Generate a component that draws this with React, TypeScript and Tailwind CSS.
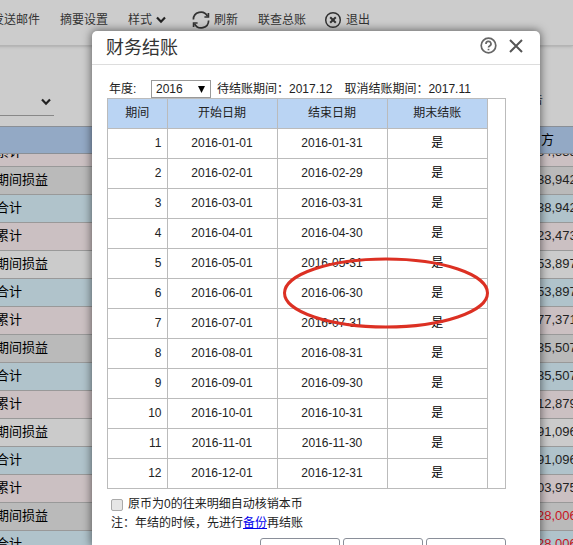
import { useState } from 'react';

const PERIODS = [
  ['1', '2016-01-01', '2016-01-31'],
  ['2', '2016-02-01', '2016-02-29'],
  ['3', '2016-03-01', '2016-03-31'],
  ['4', '2016-04-01', '2016-04-30'],
  ['5', '2016-05-01', '2016-05-31'],
  ['6', '2016-06-01', '2016-06-30'],
  ['7', '2016-07-01', '2016-07-31'],
  ['8', '2016-08-01', '2016-08-31'],
  ['9', '2016-09-01', '2016-09-30'],
  ['10', '2016-10-01', '2016-10-31'],
  ['11', '2016-11-01', '2016-11-30'],
  ['12', '2016-12-01', '2016-12-31'],
];

const PINK = 'bg-[#cbc0c2]';
const BLUE = 'bg-[#b0c3cb]';
const DARK = 'bg-[#bababa]';
const LIGHT = 'bg-[#cbcbcb]';

const LEDGER = [
  { label: '累计', amount: '84,535', bg: PINK },
  { label: '期间损益', amount: '38,942', bg: DARK },
  { label: '合计', amount: '38,942', bg: BLUE },
  { label: '累计', amount: '23,473', bg: PINK },
  { label: '期间损益', amount: '53,897', bg: LIGHT },
  { label: '合计', amount: '53,897', bg: BLUE },
  { label: '累计', amount: '77,371', bg: PINK },
  { label: '期间损益', amount: '35,507', bg: DARK },
  { label: '合计', amount: '35,507', bg: BLUE },
  { label: '累计', amount: '12,879', bg: PINK },
  { label: '期间损益', amount: '91,096', bg: LIGHT },
  { label: '合计', amount: '91,096', bg: BLUE },
  { label: '累计', amount: '03,975', bg: PINK },
  { label: '期间损益', amount: '28,006', bg: DARK, red: true },
  { label: '合计', amount: '28,006', bg: BLUE, red: true },
];

function Chevron() {
  return (
    <svg className="w-[10px] h-[8px]" viewBox="0 0 10 8" fill="none" stroke="#222" strokeWidth="2.2">
      <path d="M1 1.5 L5 5.7 L9 1.5" />
    </svg>
  );
}

function Toolbar() {
  return (
    <div className="h-[46px] pb-[5px] -ml-2 flex items-center text-xs text-[#333] whitespace-nowrap border-b border-[#b4b4b4] shadow-sm">
      <button type="button">发送邮件</button>
      <button type="button" className="ml-5">摘要设置</button>
      <button type="button" className="ml-5 flex items-center gap-1">
        样式
        <Chevron />
      </button>
      <button type="button" className="ml-[26px] flex items-center gap-1">
        <svg className="w-[18px] h-[18px]" viewBox="0 0 18 18" fill="none" stroke="#333" strokeWidth="1.7">
          <path d="M1.4 8.6 A7.4 7.4 0 0 1 15.4 5.2" />
          <path d="M16.6 9.4 A7.4 7.4 0 0 1 2.6 12.8" />
          <path d="M16.4 2 V6 H12.4" />
          <path d="M1.6 16 V12 H5.6" />
        </svg>
        刷新
      </button>
      <button type="button" className="ml-5">联查总账</button>
      <button type="button" className="ml-[18px] flex items-center gap-1">
        <svg className="w-[18px] h-[18px]" viewBox="0 0 18 18" fill="none" stroke="#333" strokeWidth="1.5">
          <circle cx="9" cy="9" r="7.3" />
          <path d="M6.2 6.2 L11.8 11.8 M11.8 6.2 L6.2 11.8" strokeWidth="2" />
        </svg>
        退出
      </button>
    </div>
  );
}

function Ledger() {
  return (
    <div className="-ml-1 text-[13px] text-black">
      <div className="h-[28px] bg-[#93a9c5] border-y border-[#8a8f96] flex items-center justify-end">
        <span className="w-[32px]">方</span>
      </div>
      <div className="overflow-hidden">
        <table className="w-full table-fixed border-collapse -mt-4">
          <tbody>
            {LEDGER.map((r, i) => (
              <tr key={i} className={`h-[28px] border-b border-[#999] ${r.bg}`}>
                <td className="p-0">{r.label}</td>
                <td className={`p-0 w-[36px] overflow-hidden whitespace-nowrap ${r.red ? 'text-[#c8141e]' : 'text-[#222]'}`}>
                  {r.amount}
                </td>
              </tr>
            ))}
          </tbody>
        </table>
      </div>
    </div>
  );
}

function ClosingDialog() {
  const [year, setYear] = useState('2016');
  const [autoOffset, setAutoOffset] = useState(false);

  return (
    <div role="dialog" aria-label="财务结账" className="bg-white rounded-t-[5px] w-full h-full shadow-[0_0_8px_1px_rgba(0,0,0,0.5)]">
      <div className="h-[34px] pl-[14px] pr-[17px] flex items-center justify-between border-b border-[#ddd]">
        <h1 className="text-lg leading-[30px] text-[#333]">财务结账</h1>
        <div className="flex items-center gap-3 pb-1">
          <button type="button" aria-label="帮助">
            <svg className="w-[17px] h-[17px]" viewBox="0 0 17 17" fill="none" stroke="#666" strokeWidth="1.7">
              <circle cx="8.5" cy="8.5" r="7.3" />
              <path d="M6 7 A2.5 2.4 0 1 1 9.6 8.9 Q8.5 9.5 8.5 10.6" />
              <path d="M8.5 11.8 V13.3" />
            </svg>
          </button>
          <button type="button" aria-label="关闭">
            <svg className="w-[14px] h-[14px]" viewBox="0 0 14 14" fill="none" stroke="#555" strokeWidth="2">
              <path d="M1 1 L13 13 M13 1 L1 13" />
            </svg>
          </button>
        </div>
      </div>

      <div className="pt-[14px] pl-[15px] pr-[34px] text-xs text-[#222]">
        <div className="h-[19px] pl-[2px] flex items-center whitespace-nowrap font-['Liberation_Sans','Noto_Sans_CJK_TC',sans-serif]">
          <label htmlFor="year" className="w-[42px]">年度:</label>
          <div className="relative">
            <select
              id="year"
              value={year}
              onChange={(e) => setYear(e.target.value)}
              className="block appearance-none w-[60px] h-[18px] pl-1 border border-[#999] bg-white text-xs leading-4"
            >
              <option>2016</option>
              <option>2017</option>
            </select>
            <svg className="absolute right-[6px] top-[6px] w-[7px] h-[7px] pointer-events-none" viewBox="0 0 7 7">
              <path d="M0 0 H7 L3.5 7 Z" />
            </svg>
          </div>
          <span className="ml-[6px]" lang="zh-CN">待结账期间：2017.12</span>
          <span className="ml-3" lang="zh-CN">取消结账期间：2017.11</span>
        </div>

        <div className="relative border border-[#bbb]">
          <table className="table-fixed border-collapse w-[380px] text-center">
            <thead>
              <tr className="h-[29px] bg-[#bad4f3] border-b border-[#bbb]">
                <th className="w-[59px] font-normal border-r border-[#bbb]">期间</th>
                <th className="w-[110px] font-normal border-r border-[#bbb]">开始日期</th>
                <th className="w-[110px] font-normal border-r border-[#bbb]">结束日期</th>
                <th className="font-normal border-r border-[#bbb]">期末结账</th>
              </tr>
            </thead>
            <tbody>
              {PERIODS.map(([no, start, end]) => (
                <tr key={no} className="h-[30px] border-b border-[#bbb] last:border-b-0">
                  <td className="p-0 pr-[5px] text-right border-r border-[#bbb]">{no}</td>
                  <td className="p-0 border-r border-[#bbb]">{start}</td>
                  <td className="p-0 border-r border-[#bbb]">{end}</td>
                  <td className="p-0 border-r border-[#bbb] text-black">是</td>
                </tr>
              ))}
            </tbody>
          </table>
          <svg className="absolute left-[173px] top-[157px] w-[210px] h-[74px]" viewBox="0 0 210 74" fill="none" stroke="#dc3023" strokeWidth="3">
            <ellipse cx="105" cy="37" rx="101.5" ry="34" />
          </svg>
        </div>

        <div className="pt-[6px] pl-[4px] leading-[19px]">
          <label className="flex items-center gap-[5px]">
            <input
              type="checkbox"
              checked={autoOffset}
              onChange={(e) => setAutoOffset(e.target.checked)}
              className="appearance-none w-[12px] h-[12px] border border-[#aaa] rounded-[2px] bg-[#e6e6e6] checked:bg-[#5b8def]"
            />
            原币为0的往来明细自动核销本币
          </label>
          <p>
            注：年结的时候，先进行<a href="#backup" className="text-[#0000ee] underline">备份</a>再结账
          </p>
        </div>

        <div className="mt-[5px] flex justify-end gap-[3px]">
          <button type="button" className="w-[80px] h-[26px] rounded-[3px] border border-[#8a8f99]" aria-label="结账" />
          <button type="button" className="w-[80px] h-[26px] rounded-[3px] border border-[#8a8f99]" aria-label="取消结账" />
          <button type="button" className="w-[80px] h-[26px] rounded-[3px] border border-[#8a8f99]" aria-label="关闭窗口" />
        </div>
      </div>
    </div>
  );
}

export default function App() {
  return (
    <div className="relative h-screen overflow-hidden bg-[#cccccc] font-['Liberation_Sans','Noto_Sans_CJK_SC',sans-serif]">
      <Toolbar />
      <div className="h-[80px] pt-[46px] flex justify-between items-start">
        <div className="w-[54px] h-[24px] pr-[3px] pt-[6px] flex justify-end border-b border-[#888]">
          <Chevron />
        </div>
        <span className="w-[42px] text-xs text-[#333]">告</span>
      </div>
      <Ledger />
      <div className="absolute inset-0 pt-[31px] pl-[92px] pr-[33px]">
        <ClosingDialog />
      </div>
    </div>
  );
}
